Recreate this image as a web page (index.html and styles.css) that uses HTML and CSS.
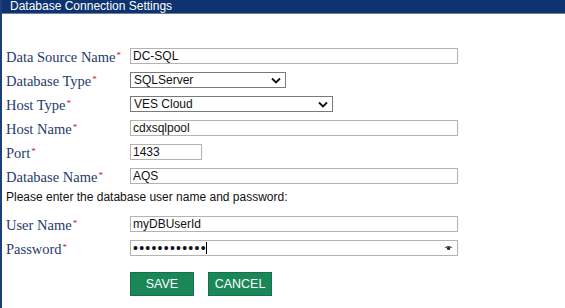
FILE: index.html
```html
<!DOCTYPE html>
<html lang="en">
<head>
    <meta charset="UTF-8">
    <title>Database Connection Settings</title>
    <link rel="stylesheet" href="styles.css">
</head>
<body>
    <div class="page">
        <div class="title-bar">Database Connection Settings</div>

        <form class="settings" onsubmit="return false">
            <label class="field-label" for="dsn">Data Source Name<span class="req">*</span></label>
            <div class="field"><input id="dsn" class="text wide" type="text" value="DC-SQL"></div>

            <label class="field-label" for="dbType">Database Type<span class="req">*</span></label>
            <div class="field">
                <select id="dbType" class="select db-type">
                    <option>SQLServer</option>
                    <option>Oracle</option>
                </select>
            </div>

            <label class="field-label" for="hostType">Host Type<span class="req">*</span></label>
            <div class="field">
                <select id="hostType" class="select host-type">
                    <option>VES Cloud</option>
                    <option>On Premise</option>
                </select>
            </div>

            <label class="field-label" for="hostName">Host Name<span class="req">*</span></label>
            <div class="field"><input id="hostName" class="text wide" type="text" value="cdxsqlpool"></div>

            <label class="field-label" for="port">Port<span class="req">*</span></label>
            <div class="field"><input id="port" class="text port" type="text" value="1433"></div>

            <label class="field-label" for="dbName">Database Name<span class="req">*</span></label>
            <div class="field"><input id="dbName" class="text wide" type="text" value="AQS"></div>

            <p class="hint">Please enter the database user name and password:</p>

            <label class="field-label" for="user">User Name<span class="req">*</span></label>
            <div class="field"><input id="user" class="text wide" type="text" value="myDBUserId"></div>

            <label class="field-label" for="pwd">Password<span class="req">*</span></label>
            <div class="field">
                <div class="pwd-wrap">
                    <input id="pwd" class="text wide pwd" type="password" value="secretpass12">
                    <span class="caret"></span>
                    <svg class="eye" width="9" height="6" viewBox="0 0 9 6">
                        <path d="M0.5 3 Q4.5 -1 8.5 3 L7 3 Q4.5 0.6 2 3 Z" fill="#222"/>
                        <circle cx="4.5" cy="3.4" r="1.6" fill="#222"/>
                    </svg>
                </div>
            </div>

            <div class="buttons">
                <button class="btn" type="button">SAVE</button>
                <button class="btn" type="button">CANCEL</button>
            </div>
        </form>
    </div>
</body>
</html>
```

FILE: styles.css
```css
body {
    margin: 0;
    background: #ffffff;
    font-family: "Liberation Sans", Arial, sans-serif;
}
.page {
    border-left: 2px solid #1d3f78;
    min-height: 308px;
    box-sizing: border-box;
}
.title-bar {
    background: #0e3370;
    color: #ffffff;
    font-size: 12px;
    line-height: 13px;
    height: 13px;
    padding-left: 8px;
    border-bottom: 1px solid #6b7f9c;
}
.settings {
    display: grid;
    grid-template-columns: 124px 1fr;
    grid-auto-rows: 16px;
    row-gap: 8px;
    padding: 34px 0 0 4px;
}
.field-label {
    font-family: "Liberation Serif", "Times New Roman", serif;
    font-size: 14.5px;
    line-height: 14px;
    color: #1f3a6b;
    white-space: nowrap;
}
.req {
    color: #c8102e;
    font-size: 9px;
    vertical-align: 4px;
    margin-left: 1px;
}
.field {
    display: flex;
    align-items: center;
}
.text, .select {
    box-sizing: border-box;
    height: 16px;
    font-family: "Liberation Sans", Arial, sans-serif;
    font-size: 12px;
    color: #111;
    border: 1px solid #b3b3b3;
    padding: 0 2px;
    margin: 0;
    background: #fff;
}
.wide {
    width: 328px;
}
.port {
    width: 72px;
}
.select {
    appearance: none;
    border-color: #7a7a7a;
    padding: 0 16px 0 3px;
    background-image: url("data:image/svg+xml,%3Csvg xmlns='http://www.w3.org/2000/svg' width='10' height='7'%3E%3Cpath d='M1 1.5 L5 5.5 L9 1.5' fill='none' stroke='%23111' stroke-width='1.8'/%3E%3C/svg%3E");
    background-repeat: no-repeat;
    background-position: right 4px center;
}
.db-type {
    width: 156px;
}
.host-type {
    width: 203px;
}
.hint {
    grid-column: 1 / 3;
    margin: -2px 0 8px;
    font-size: 12px;
    line-height: 14px;
    color: #111;
}
.pwd-wrap {
    position: relative;
    display: flex;
}
.pwd {
    font-size: 14px;
    letter-spacing: 1.25px;
    line-height: 14px;
}
.caret {
    position: absolute;
    left: 76px;
    top: 2px;
    width: 1px;
    height: 12px;
    background: #000;
}
.eye {
    position: absolute;
    right: 5px;
    top: 5px;
}
.buttons {
    grid-column: 2;
    grid-row: span 2;
    display: flex;
    gap: 14px;
    padding-top: 8px;
}
.btn {
    width: 64px;
    height: 24px;
    background: #1a8758;
    color: #ffffff;
    border: 1px solid #147048;
    font-family: "Liberation Sans", Arial, sans-serif;
    font-size: 12.5px;
    padding: 0;
    cursor: pointer;
}
```
